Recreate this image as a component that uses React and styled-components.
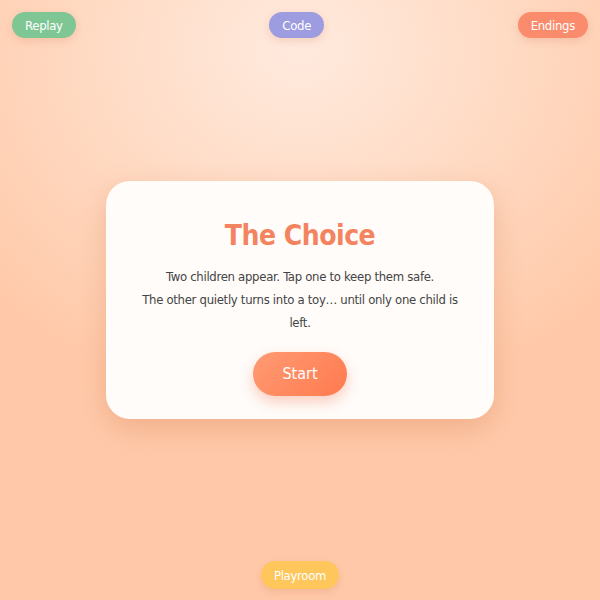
import React from "react";
import styled, { createGlobalStyle } from "styled-components";

const Global = createGlobalStyle`
  html, body { margin: 0; padding: 0; height: 100%; }
  body {
    font-family: "DejaVu Sans Condensed", "Liberation Sans", sans-serif;
    background: radial-gradient(ellipse 70% 60% at 50% 8%, #ffeade 0%, #ffdcc6 45%, #ffc9a9 100%);
    background-color: #ffc9a9;
    min-height: 100vh;
  }
`;

const Page = styled.div`
  height: 100vh;
  display: flex;
  flex-direction: column;
`;

const Bar = styled.div`
  display: flex;
  justify-content: ${(p) => p.$justify || "space-between"};
  align-items: center;
  padding: ${(p) => p.$pad};
`;

const Pill = styled.button`
  border: none;
  border-radius: 999px;
  background: ${(p) => p.$bg};
  color: #fff;
  font-family: inherit;
  font-size: 13px;
  letter-spacing: -0.3px;
  height: ${(p) => p.$h || 26}px;
  padding: 0 13px;
  box-shadow: 0 3px 8px rgba(200, 120, 80, 0.22);
  cursor: pointer;
`;

const Middle = styled.main`
  flex: 1;
  display: flex;
  align-items: center;
  justify-content: center;
`;

const Card = styled.section`
  width: 388px;
  box-sizing: border-box;
  background: #fffcfa;
  border-radius: 24px;
  padding: 34px 32px 23px;
  display: flex;
  flex-direction: column;
  align-items: center;
  box-shadow: 0 10px 28px rgba(200, 110, 60, 0.28);
`;

const Title = styled.h1`
  margin: 0;
  font-size: 28px;
  letter-spacing: -0.5px;
  line-height: 41px;
  font-weight: 700;
  color: #f4845f;
`;

const Text = styled.p`
  margin: 9px 0 18px;
  font-size: 13px;
  letter-spacing: -0.3px;
  line-height: 23px;
  color: #444;
  text-align: center;
`;

const StartButton = styled.button`
  border: none;
  border-radius: 999px;
  width: 94px;
  height: 44px;
  font-family: inherit;
  font-size: 16px;
  color: #fff;
  background: linear-gradient(135deg, #ff9b73 0%, #ff7a4f 100%);
  box-shadow: 0 6px 14px rgba(240, 120, 80, 0.35);
  cursor: pointer;
`;

export default function App() {
  return (
    <>
      <Global />
      <Page>
        <Bar $pad="12px 12px 0">
          <Pill $bg="#7ec693">Replay</Pill>
          <Pill $bg="#9d9ce0">Code</Pill>
          <Pill $bg="#fa8b6d">Endings</Pill>
        </Bar>
        <Middle>
          <Card>
            <Title>The Choice</Title>
            <Text>
              Two children appear. Tap one to keep them safe.
              <br />
              The other quietly turns into a toy… until only one child is left.
            </Text>
            <StartButton>Start</StartButton>
          </Card>
        </Middle>
        <Bar $justify="center" $pad="0 0 11px">
          <Pill $bg="#fec65b" $h={28}>Playroom</Pill>
        </Bar>
      </Page>
    </>
  );
}
